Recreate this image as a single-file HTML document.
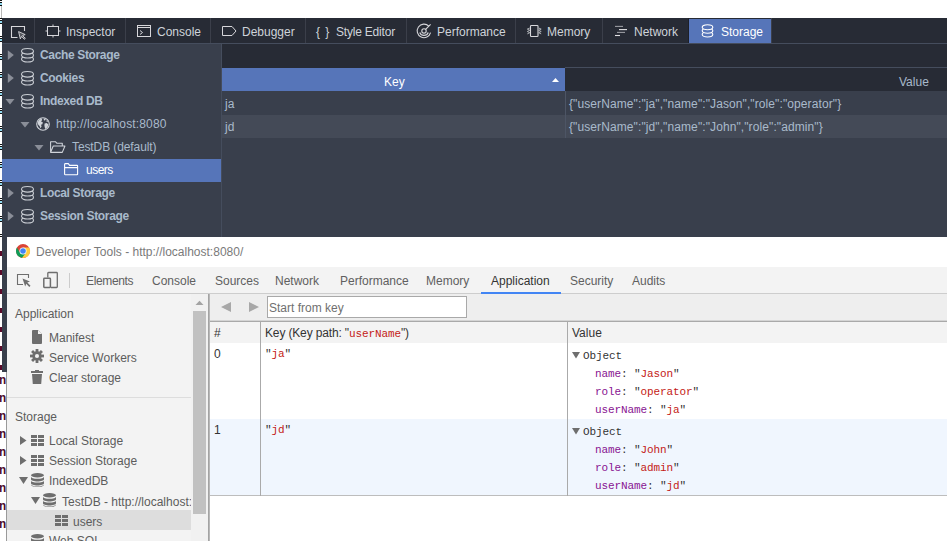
<!DOCTYPE html>
<html><head><meta charset="utf-8">
<style>
*{margin:0;padding:0;box-sizing:border-box}
html,body{width:947px;height:541px;overflow:hidden;background:#fff;position:relative;font-family:"Liberation Sans",sans-serif;font-size:12px}
.a{position:absolute}
.t{position:absolute;white-space:pre;line-height:14px}
svg{position:absolute;overflow:visible}
/* firefox */
#ff{left:2px;top:18px;width:945px;height:354px;background:#393f4c}
#fftb{left:2px;top:18px;width:945px;height:25px;background:#272b35}
.ffsep{position:absolute;top:18px;width:1px;height:25px;background:#3b3f4a}
.fft{color:#ced3d9}
.ffside{color:#a9bacb;font-weight:bold;letter-spacing:-0.35px}
.ffrow{color:#a9bacb}
/* chrome */
#cw{left:7px;top:237px;width:940px;height:304px;background:#fff}
.ct{color:#606060}
.mono{font-family:"Liberation Mono",monospace;font-size:11px;letter-spacing:-0.1px}
.str{color:#c41a16}
.prop{color:#881391}
</style></head><body>
<svg width="0" height="0" style="position:absolute">
<defs>
<g id="ring" stroke="#c8ccd2" stroke-width="1.1" fill="#393f4c">
  <ellipse cx="7.5" cy="11.2" rx="6" ry="2.8"/>
  <ellipse cx="7.5" cy="7.2" rx="6" ry="2.8"/>
  <ellipse cx="7.5" cy="3.3" rx="6" ry="2.8"/>
</g>
</defs></svg>
<!-- left edge line -->
<div class="a" style="left:0;top:0;width:2px;height:237px;background:repeating-linear-gradient(to bottom,#111 0,#111 1px,#fff 1px,#fff 2px,#111 2px,#111 3px,#8fd8f0 3px,#8fd8f0 5px,#111 5px,#111 6px,#fff 6px,#fff 18px)"></div><div class="a" style="left:0;top:237px;width:2px;height:135px;background:repeating-linear-gradient(to bottom,#fff 0,#fff 14px,#5a0a2a 14px,#5a0a2a 19px)"></div><div class="a" style="left:1px;top:6px;width:1px;height:12px;background:#b8b8b8"></div>

<!-- ================= FIREFOX ================= -->
<div id="ff" class="a"></div>
<div id="fftb" class="a"></div>
<div class="a" style="left:2px;top:43px;width:945px;height:1px;background:#454d5d"></div>
<div class="ffsep" style="left:34px"></div>
<div class="ffsep" style="left:125px"></div>
<div class="ffsep" style="left:210px"></div>
<div class="ffsep" style="left:305px"></div>
<div class="ffsep" style="left:406px"></div>
<div class="ffsep" style="left:515px"></div>
<div class="ffsep" style="left:602px"></div>
<div class="a" style="left:688px;top:18px;width:1px;height:25px;background:#1d2029"></div>
<div class="a" style="left:689px;top:19px;width:82px;height:24px;background:#5675b9"></div>
<div class="ffsep" style="left:771px"></div>

<!-- picker icon -->
<svg style="left:10px;top:25px" width="17" height="15" viewBox="0 0 17 15">
  <path d="M7.5 12.5H1.5V1.5H14.5V6" fill="none" stroke="#d7d7db" stroke-width="1.1"/>
  <path d="M8.6 6.6L15.2 9.6L12.6 10.5L15.3 13.4L14.3 14.3L11.6 11.4L10.3 13.9Z" fill="#55585f" stroke="#d7d7db" stroke-width="0.9" stroke-linejoin="round"/>
</svg>
<!-- inspector icon -->
<svg style="left:45px;top:24px" width="16" height="14" viewBox="0 0 16 14">
  <rect x="2.5" y="2.5" width="11" height="9" fill="none" stroke="#d7d7db"/>
  <path d="M8 0.5V2M8 12V13.5M0.5 7H2M14 7H15.5" stroke="#d7d7db" stroke-width="1"/>
</svg>
<div class="t fft" style="left:66px;top:25px">Inspector</div>
<!-- console icon -->
<svg style="left:136px;top:24px" width="16" height="14" viewBox="0 0 16 14">
  <rect x="1.5" y="1.5" width="13" height="11" fill="none" stroke="#d7d7db"/>
  <path d="M1.5 3.5H14.5" stroke="#d7d7db"/>
  <path d="M4 6.5L6.5 8.5L4 10.5" fill="none" stroke="#d7d7db"/>
</svg>
<div class="t fft" style="left:157px;top:25px">Console</div>
<!-- debugger icon -->
<svg style="left:221px;top:24px" width="16" height="14" viewBox="0 0 16 14">
  <path d="M1.5 2.5H11L15 7L11 11.5H1.5Z" fill="none" stroke="#d7d7db" stroke-linejoin="round"/>
</svg>
<div class="t fft" style="left:242px;top:25px">Debugger</div>
<div class="t fft" style="left:316px;top:25px;letter-spacing:1px">{ }</div>
<div class="t fft" style="left:336px;top:25px;letter-spacing:-0.2px">Style Editor</div>
<!-- performance icon -->
<svg style="left:416px;top:23px" width="17" height="16" viewBox="0 0 17 16">
  <g fill="none" stroke="#d7d7db" stroke-width="1.1">
  <path d="M14.57 9.66A6.8 6.8 0 1 1 12.81 3.09"/>
  <path d="M12.23 9.44A4.5 4.5 0 0 1 3.77 9.44"/>
  <circle cx="8" cy="7.9" r="2.2"/>
  <path d="M9.6 6.3L14.6 1.3"/>
  </g>
</svg>
<div class="t fft" style="left:437px;top:25px">Performance</div>
<!-- memory icon -->
<svg style="left:526px;top:23px" width="16" height="16" viewBox="0 0 16 16">
  <rect x="4.5" y="2.5" width="7.5" height="11" rx="0.8" fill="none" stroke="#d7d7db" stroke-width="1.1"/>
  <path d="M3.8 5L1.3 6.1L3.8 7.3L1.3 8.5L3.8 9.7L1.3 10.9M12.7 5L15.2 6.1L12.7 7.3L15.2 8.5L12.7 9.7L15.2 10.9" fill="none" stroke="#b8bbc0" stroke-width="0.9"/>
</svg>
<div class="t fft" style="left:547px;top:25px">Memory</div>
<!-- network icon -->
<svg style="left:613px;top:24px" width="16" height="14" viewBox="0 0 16 14">
  <path d="M2 2.4H10" stroke="#9a9ca3" stroke-width="1.1"/>
  <path d="M6 5.6H14" stroke="#e0e0e3" stroke-width="1.1"/>
  <path d="M4 8.4H12" stroke="#9a9ca3" stroke-width="1.1"/>
  <path d="M2 11.5H7" stroke="#e0e0e3" stroke-width="1.1"/>
</svg>
<div class="t fft" style="left:634px;top:25px">Network</div>
<!-- storage icon -->
<svg style="left:701px;top:24px" width="14" height="15" viewBox="0 0 14 15">
  <g stroke="#fff" stroke-width="1.1" fill="#5675b9">
  <ellipse cx="6.5" cy="10.5" rx="5.3" ry="2.5"/>
  <ellipse cx="6.5" cy="6.8" rx="5.3" ry="2.5"/>
  <ellipse cx="6.5" cy="3.3" rx="5.3" ry="2.5"/>
  </g>
</svg>
<div class="t" style="left:721px;top:25px;color:#fff">Storage</div>

<!-- sidebar splitter -->
<div class="a" style="left:221px;top:44px;width:1px;height:193px;background:#454d5d"></div>
<!-- table header -->
<div class="a" style="left:222px;top:44px;width:725px;height:47px;background:#272b35"></div>
<div class="a" style="left:565px;top:67px;width:382px;height:1px;background:#454d5d"></div>
<div class="a" style="left:222px;top:68px;width:343px;height:23px;background:#5675b9"></div>
<div class="t" style="left:384px;top:75px;color:#fff">Key</div>
<svg style="left:551px;top:77px" width="9" height="6" viewBox="0 0 9 6"><path d="M1 5L4.5 1L8 5Z" fill="#fff"/></svg>
<div class="t ffrow" style="left:899px;top:75px">Value</div>
<!-- rows -->
<div class="a" style="left:222px;top:115px;width:725px;height:23px;background:#444a57"></div>
<div class="a" style="left:565px;top:91px;width:1px;height:47px;background:#4d5565"></div>
<div class="t ffrow" style="left:225px;top:97px">ja</div>
<div class="t ffrow" style="left:225px;top:120px">jd</div>
<div class="t ffrow" style="left:569px;top:97px;letter-spacing:0.1px">{"userName":"ja","name":"Jason","role":"operator"}</div>
<div class="t ffrow" style="left:569px;top:120px;letter-spacing:0.1px">{"userName":"jd","name":"John","role":"admin"}</div>

<!-- sidebar tree -->
<div class="a" style="left:2px;top:159px;width:219px;height:23px;background:#5675b9"></div>
<!-- arrows -->
<svg style="left:7px;top:50px" width="8" height="11" viewBox="0 0 8 11"><path d="M0.8 0.2L6.8 5.1L0.8 10Z" fill="#8a8e98"/></svg>
<svg style="left:7px;top:73px" width="8" height="11" viewBox="0 0 8 11"><path d="M0.8 0.2L6.8 5.1L0.8 10Z" fill="#8a8e98"/></svg>
<svg style="left:5px;top:98px" width="10" height="7" viewBox="0 0 10 7"><path d="M0.5 1L9.5 1L5 6.5Z" fill="#8a8e98"/></svg>
<svg style="left:20px;top:121px" width="10" height="7" viewBox="0 0 10 7"><path d="M0.5 1L9.5 1L5 6.5Z" fill="#8a8e98"/></svg>
<svg style="left:34px;top:144px" width="10" height="7" viewBox="0 0 10 7"><path d="M0.5 1L9.5 1L5 6.5Z" fill="#8a8e98"/></svg>
<svg style="left:7px;top:188px" width="8" height="11" viewBox="0 0 8 11"><path d="M0.8 0.2L6.8 5.1L0.8 10Z" fill="#8a8e98"/></svg>
<svg style="left:7px;top:211px" width="8" height="11" viewBox="0 0 8 11"><path d="M0.8 0.2L6.8 5.1L0.8 10Z" fill="#8a8e98"/></svg>
<!-- db icons -->
<svg style="left:20px;top:48px" width="14" height="15" viewBox="0 0 14 15"><use href="#ring"/></svg>
<svg style="left:20px;top:71px" width="14" height="15" viewBox="0 0 14 15"><use href="#ring"/></svg>
<svg style="left:20px;top:94px" width="14" height="15" viewBox="0 0 14 15"><use href="#ring"/></svg>
<svg style="left:20px;top:186px" width="14" height="15" viewBox="0 0 14 15"><use href="#ring"/></svg>
<svg style="left:20px;top:209px" width="14" height="15" viewBox="0 0 14 15"><use href="#ring"/></svg>
<!-- globe -->
<svg style="left:36px;top:117px" width="14" height="14" viewBox="0 0 14 14">
  <circle cx="7" cy="7" r="6.3" fill="none" stroke="#d0d4da" stroke-width="1.1"/>
  <path d="M2.2 4.2L3.6 2.4L5.6 1.6L6.2 3L5 4.4L6.8 5.2L6.4 7.2L5 7.8L5.6 9.6L4.4 11.2L3.6 9L2.4 8L1.6 6Z" fill="#d0d4da"/>
  <path d="M7.6 1.5L9.8 1.9L9.2 3.2L8 3.4Z M8.6 6.4L10.8 6L12.4 7.6L11.6 10L9.6 12.2L8.8 10.4L8.4 8.4Z M10.6 3.2L12 3.8L11.6 5L10.4 4.6Z" fill="#d0d4da"/>
</svg>
<!-- folder open -->
<svg style="left:49px;top:140px" width="17" height="13" viewBox="0 0 16 12">
  <path d="M1.5 11.5V1.5H6L7.5 3H12.5V5.5M1.5 11.5L4 5.5H15L12.5 11.5Z" fill="none" stroke="#d0d4da" stroke-linejoin="round"/>
</svg>
<!-- folder -->
<svg style="left:64px;top:163px" width="15" height="13" viewBox="0 0 15 13">
  <path d="M0.6 11V1.5Q0.6 0.6 1.5 0.6H4.3L5.6 2.4H13Q13.6 2.4 13.6 3V11.2Q13.6 11.8 13 11.8H1.4Q0.6 11.8 0.6 11Z M0.6 4.6H13.6" fill="none" stroke="#fff" stroke-width="1.1" stroke-linejoin="round"/>
</svg>
<div class="t ffside" style="left:40px;top:48px">Cache Storage</div>
<div class="t ffside" style="left:40px;top:71px">Cookies</div>
<div class="t ffside" style="left:40px;top:94px">Indexed DB</div>
<div class="t ffrow" style="left:56px;top:117px;letter-spacing:0.15px">http://localhost:8080</div>
<div class="t ffrow" style="left:72px;top:140px;letter-spacing:-0.1px">TestDB (default)</div>
<div class="t" style="left:86px;top:163px;color:#fff;letter-spacing:-0.5px">users</div>
<div class="t ffside" style="left:40px;top:186px">Local Storage</div>
<div class="t ffside" style="left:40px;top:209px">Session Storage</div>

<!-- ================= left strip artifacts ================= -->
<div class="a" style="left:0;top:372px;width:7px;height:169px;background:#fff"></div>
<div class="a" style="left:6px;top:372px;width:1px;height:169px;background:#9a9a9a"></div><div class="a mono" style="left:-1px;top:372px;width:7px;overflow:hidden;color:#4a0c2c;font-size:12px;line-height:18px;font-weight:bold;white-space:pre">n
n
n
n
n
n
n
n
n</div>

<!-- ================= CHROME ================= -->
<div id="cw" class="a"></div>
<!-- chrome logo -->
<svg style="left:16px;top:244px" width="14" height="14" viewBox="0 0 14 14">
  <circle cx="7" cy="7" r="6.9" fill="#db4437"/>
  <path d="M7 7L0.95 3.5A6.9 6.9 0 0 0 6 13.83Z" fill="#0f9d58"/>
  <path d="M7 7L13.05 3.5A6.9 6.9 0 0 1 6 13.83Z" fill="#ffcd40"/>
  <path d="M7 3.5L13.05 3.5L10 8.8Z" fill="#ffcd40"/>
  <path d="M4 8.8L0.95 3.5L7 3.5Z" fill="#db4437"/>
  <path d="M10 8.8L6 13.83L4 8.8Z" fill="#0f9d58"/>
  <circle cx="7" cy="7" r="3.5" fill="#fff"/>
  <circle cx="7" cy="7" r="2.8" fill="#4285f4"/>
</svg>
<div class="t" style="left:36px;top:245px;color:#7a7a7a">Developer Tools - http://localhost:8080/</div>

<!-- toolbar -->
<div class="a" style="left:7px;top:267px;width:940px;height:26px;background:#f3f3f3"></div>
<div class="a" style="left:7px;top:293px;width:940px;height:1px;background:#cdcdcd"></div>
<svg style="left:16px;top:273px" width="16" height="14" viewBox="0 0 16 14">
  <path d="M7 11.5H1.5V1.5H12.5V5" fill="none" stroke="#6e6e6e" stroke-width="1.1"/>
  <path d="M6.5 5.5L14 8.5L11.3 9.6L14.5 12.8L13.3 14L10.2 10.8L9.2 13.5Z" fill="#6e6e6e"/>
</svg>
<svg style="left:42px;top:271px" width="17" height="18" viewBox="0 0 17 18">
  <path d="M5.8 6.5V2.2Q5.8 1.5 6.5 1.5H14.6Q15.3 1.5 15.3 2.2V15.8Q15.3 16.5 14.6 16.5H8.8" fill="none" stroke="#6e6e6e" stroke-width="1.3"/>
  <rect x="1.8" y="7.3" width="6.6" height="9.2" rx="0.7" fill="none" stroke="#6e6e6e" stroke-width="1.5"/>
</svg>
<div class="a" style="left:69px;top:273px;width:1px;height:15px;background:#ccc"></div>
<div class="t ct" style="left:86px;top:274px;letter-spacing:-0.35px">Elements</div>
<div class="t ct" style="left:152px;top:274px">Console</div>
<div class="t ct" style="left:215px;top:274px">Sources</div>
<div class="t ct" style="left:275px;top:274px">Network</div>
<div class="t ct" style="left:340px;top:274px">Performance</div>
<div class="t ct" style="left:426px;top:274px">Memory</div>
<div class="t" style="left:491px;top:274px;color:#333">Application</div>
<div class="t ct" style="left:570px;top:274px">Security</div>
<div class="t ct" style="left:632px;top:274px">Audits</div>
<div class="a" style="left:481px;top:292px;width:80px;height:2px;background:#4285f4"></div>

<!-- sidebar -->
<div class="a" style="left:7px;top:294px;width:201px;height:247px;background:#f3f3f3"></div>
<div class="a" style="left:191px;top:294px;width:17px;height:247px;background:#f1f1f1"></div>
<svg style="left:195px;top:300px" width="9" height="6" viewBox="0 0 9 6"><path d="M0.5 5L4.5 0.8L8.5 5Z" fill="#a3a3a3"/></svg>
<div class="a" style="left:193px;top:311px;width:13px;height:203px;background:#c1c1c1"></div>
<div class="a" style="left:208px;top:294px;width:1px;height:247px;background:#a3a3a3"></div>
<div class="a" style="left:209px;top:294px;width:1px;height:247px;background:#b8b8b8"></div>

<div class="t" style="left:15px;top:307px;color:#5c5c5c">Application</div>
<svg style="left:32px;top:330px" width="10" height="14" viewBox="0 0 10 14"><path d="M1 0H6L10 4V13Q10 14 9 14H1Q0 14 0 13V1Q0 0 1 0Z" fill="#6e6e6e"/><path d="M6 0V4H10Z" fill="#f3f3f3"/></svg>
<div class="t" style="left:49px;top:331px;color:#5c5c5c">Manifest</div>
<svg style="left:30px;top:349px" width="14" height="14" viewBox="0 0 15 15">
  <g fill="#6e6e6e"><circle cx="7.5" cy="7.5" r="5"/>
  <rect x="6" y="0" width="3" height="15"/><rect x="0" y="6" width="15" height="3"/>
  <rect x="6" y="0" width="3" height="15" transform="rotate(45 7.5 7.5)"/><rect x="6" y="0" width="3" height="15" transform="rotate(-45 7.5 7.5)"/></g>
  <circle cx="7.5" cy="7.5" r="2.2" fill="#f3f3f3"/>
</svg>
<div class="t" style="left:49px;top:351px;color:#5c5c5c">Service Workers</div>
<svg style="left:31px;top:370px" width="12" height="14" viewBox="0 0 12 14"><rect x="0" y="1" width="12" height="2" fill="#6e6e6e"/><rect x="4" y="0" width="4" height="2" fill="#6e6e6e"/><path d="M1 4H11L10.2 14H1.8Z" fill="#6e6e6e"/></svg>
<div class="t" style="left:49px;top:371px;color:#5c5c5c">Clear storage</div>
<div class="a" style="left:7px;top:397px;width:184px;height:1px;background:#ddd"></div>
<div class="t" style="left:15px;top:410px;color:#5c5c5c">Storage</div>
<!-- arrows chrome -->
<svg style="left:20px;top:436px" width="7" height="9" viewBox="0 0 7 9"><path d="M0 0L6.5 4.5L0 9Z" fill="#6e6e6e"/></svg>
<svg style="left:20px;top:456px" width="7" height="9" viewBox="0 0 7 9"><path d="M0 0L6.5 4.5L0 9Z" fill="#6e6e6e"/></svg>
<svg style="left:19px;top:477px" width="9" height="7" viewBox="0 0 9 7"><path d="M0 0L9 0L4.5 7Z" fill="#6e6e6e"/></svg>
<svg style="left:31px;top:497px" width="9" height="7" viewBox="0 0 9 7"><path d="M0 0L9 0L4.5 7Z" fill="#6e6e6e"/></svg>
<!-- grid icons -->
<svg style="left:31px;top:435px" width="13" height="11" viewBox="0 0 13 11"><g fill="#6e6e6e"><rect x="0" y="0" width="6" height="3"/><rect x="7" y="0" width="6" height="3"/><rect x="0" y="4" width="6" height="3"/><rect x="7" y="4" width="6" height="3"/><rect x="0" y="8" width="6" height="3"/><rect x="7" y="8" width="6" height="3"/></g></svg>
<svg style="left:31px;top:455px" width="13" height="11" viewBox="0 0 13 11"><g fill="#6e6e6e"><rect x="0" y="0" width="6" height="3"/><rect x="7" y="0" width="6" height="3"/><rect x="0" y="4" width="6" height="3"/><rect x="7" y="4" width="6" height="3"/><rect x="0" y="8" width="6" height="3"/><rect x="7" y="8" width="6" height="3"/></g></svg>
<!-- db icons chrome -->
<svg style="left:31px;top:473px" width="13" height="14" viewBox="0 0 13 14"><g fill="#6e6e6e"><ellipse cx="6.5" cy="2.2" rx="6.5" ry="2.2"/><path d="M0 3.5C0 5 3 5.8 6.5 5.8S13 5 13 3.5V6.2C13 7.6 10 8.4 6.5 8.4S0 7.6 0 6.2Z"/><path d="M0 7.5C0 9 3 9.6 6.5 9.6S13 9 13 7.5V10.2C13 11.6 10 12.4 6.5 12.4S0 11.6 0 10.2Z"/><path d="M0 11.2C0 12.6 3 13.4 6.5 13.4S13 12.6 13 11.2V11.8C13 13.2 10 14 6.5 14S0 13.2 0 11.8Z"/></g></svg>
<svg style="left:43px;top:493px" width="13" height="14" viewBox="0 0 13 14"><g fill="#6e6e6e"><ellipse cx="6.5" cy="2.2" rx="6.5" ry="2.2"/><path d="M0 3.5C0 5 3 5.8 6.5 5.8S13 5 13 3.5V6.2C13 7.6 10 8.4 6.5 8.4S0 7.6 0 6.2Z"/><path d="M0 7.5C0 9 3 9.6 6.5 9.6S13 9 13 7.5V10.2C13 11.6 10 12.4 6.5 12.4S0 11.6 0 10.2Z"/><path d="M0 11.2C0 12.6 3 13.4 6.5 13.4S13 12.6 13 11.2V11.8C13 13.2 10 14 6.5 14S0 13.2 0 11.8Z"/></g></svg>
<div class="t" style="left:49px;top:434px;color:#5c5c5c">Local Storage</div>
<div class="t" style="left:49px;top:454px;color:#5c5c5c">Session Storage</div>
<div class="t" style="left:49px;top:474px;color:#5c5c5c">IndexedDB</div>
<div class="a" style="left:7px;top:294px;width:184px;height:247px;overflow:hidden">
  <div class="t" style="left:55px;top:201px;color:#5c5c5c">TestDB - http://localhost:8080</div>
  <div class="a" style="left:0;top:216px;width:184px;height:20px;background:#dddddd"></div>
  <svg style="left:48px;top:221px" width="13" height="11" viewBox="0 0 13 11"><g fill="#6e6e6e"><rect x="0" y="0" width="6" height="3"/><rect x="7" y="0" width="6" height="3"/><rect x="0" y="4" width="6" height="3"/><rect x="7" y="4" width="6" height="3"/><rect x="0" y="8" width="6" height="3"/><rect x="7" y="8" width="6" height="3"/></g></svg>
  <div class="t" style="left:66px;top:221px;color:#5c5c5c">users</div>
  <svg style="left:24px;top:240px" width="13" height="14" viewBox="0 0 13 14"><g fill="#6e6e6e"><ellipse cx="6.5" cy="2.2" rx="6.5" ry="2.2"/><path d="M0 3.5C0 5 3 5.8 6.5 5.8S13 5 13 3.5V6.2C13 7.6 10 8.4 6.5 8.4S0 7.6 0 6.2Z"/></g></svg>
  <div class="t" style="left:42px;top:240px;color:#5c5c5c">Web SQL</div>
</div>

<!-- main panel -->
<div class="a" style="left:210px;top:294px;width:737px;height:26px;background:#eeeeee"></div>
<div class="a" style="left:210px;top:320px;width:737px;height:1px;background:#d4d4d4"></div><div class="a" style="left:210px;top:321px;width:737px;height:1px;background:#a9a9a9"></div>
<svg style="left:221px;top:302px" width="10" height="10" viewBox="0 0 10 10"><path d="M10 0V10L0 5Z" fill="#a8a8a8"/></svg>
<svg style="left:249px;top:302px" width="10" height="10" viewBox="0 0 10 10"><path d="M0 0V10L10 5Z" fill="#a8a8a8"/></svg>
<div class="a" style="left:267px;top:296px;width:200px;height:22px;background:#fff;border:1px solid #a9a9a9"></div>
<div class="t" style="left:269px;top:301px;color:#707070">Start from key</div>

<div class="a" style="left:210px;top:322px;width:737px;height:21px;background:#f3f3f3"></div>
<div class="a" style="left:210px;top:419px;width:737px;height:76px;background:#f0f6fe"></div>
<div class="a" style="left:210px;top:495px;width:737px;height:1px;background:#bdbdbd"></div>
<div class="a" style="left:260px;top:321px;width:1px;height:175px;background:#aaa"></div>
<div class="a" style="left:567px;top:321px;width:1px;height:175px;background:#aaa"></div>
<div class="t" style="left:214px;top:326px;color:#333">#</div>
<div class="t" style="left:265px;top:326px;color:#333;letter-spacing:-0.15px">Key (Key path: "<span class="mono str">userName</span>")</div>
<div class="t" style="left:572px;top:326px;color:#333">Value</div>
<div class="t" style="left:214px;top:347px;color:#333">0</div>
<div class="t" style="left:214px;top:423px;color:#333">1</div>
<div class="t mono" style="left:265px;top:347px;color:#333">"<span class="str">ja</span>"</div>
<div class="t mono" style="left:265px;top:423px;color:#333">"<span class="str">jd</span>"</div>

<svg style="left:572px;top:352px" width="8" height="7" viewBox="0 0 8 7"><path d="M0 0H8L4 6.5Z" fill="#6e6e6e"/></svg><div class="t mono" style="left:583px;top:347px;color:#333;line-height:18px">Object</div>
<div class="t mono" style="left:595px;top:365px;color:#333;line-height:18px"><span class="prop">name</span>: "<span class="str">Jason</span>"
<span class="prop">role</span>: "<span class="str">operator</span>"
<span class="prop">userName</span>: "<span class="str">ja</span>"</div>
<svg style="left:572px;top:428px" width="8" height="7" viewBox="0 0 8 7"><path d="M0 0H8L4 6.5Z" fill="#6e6e6e"/></svg><div class="t mono" style="left:583px;top:423px;color:#333;line-height:18px">Object</div>
<div class="t mono" style="left:595px;top:441px;color:#333;line-height:18px"><span class="prop">name</span>: "<span class="str">John</span>"
<span class="prop">role</span>: "<span class="str">admin</span>"
<span class="prop">userName</span>: "<span class="str">jd</span>"</div>

</body></html>
